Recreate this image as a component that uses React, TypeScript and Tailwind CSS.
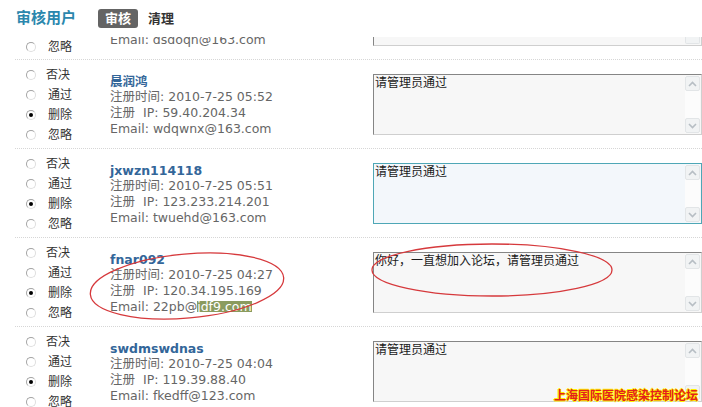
import React from "react";
import clsx from "clsx";

type Entry = {
  name: string;
  time: string;
  ip: string;
  email: React.ReactNode;
  message: string;
  focused?: boolean;
};

const ENTRIES: Entry[] = [
  {
    name: "晨润鸿",
    time: "2010-7-25 05:52",
    ip: "59.40.204.34",
    email: "wdqwnx@163.com",
    message: "请管理员通过",
  },
  {
    name: "jxwzn114118",
    time: "2010-7-25 05:51",
    ip: "123.233.214.201",
    email: "twuehd@163.com",
    message: "请管理员通过",
    focused: true,
  },
  {
    name: "fnar092",
    time: "2010-7-25 04:27",
    ip: "120.34.195.169",
    email: (
      <>
        22pb@
        <span className="inline-block bg-[#8a9b5e] leading-[11px] text-white">jdf9.com</span>
      </>
    ),
    message: "你好，一直想加入论坛，请管理员通过",
  },
  {
    name: "swdmswdnas",
    time: "2010-7-25 04:04",
    ip: "119.39.88.40",
    email: "fkedff@123.com",
    message: "请管理员通过",
  },
];

const OPTIONS = ["否决", "通过", "删除", "忽略"];

function Radio({ label, checked, first }: { label: string; checked: boolean; first: boolean }) {
  return (
    <div className="flex h-[20px] items-center">
      <span className="flex h-[10px] w-[10px] items-center justify-center rounded-full border border-[#a4a4a4] border-b-[#dedede] border-r-[#dedede] bg-white">
        {checked && <span className="h-[4px] w-[4px] rounded-full bg-black" />}
      </span>
      <span className={first ? "ml-[10px]" : "ml-[12px]"}>{label}</span>
    </div>
  );
}

function Chevron({ up }: { up?: boolean }) {
  return (
    <svg width="9" height="6" viewBox="0 0 9 6">
      <path
        d={up ? "M1 5 L4.5 1.5 L8 5" : "M1 1 L4.5 4.5 L8 1"}
        fill="none"
        stroke="#b7bec4"
        strokeWidth="1.6"
      />
    </svg>
  );
}

function ScrollButton({ up }: { up?: boolean }) {
  return (
    <div className="flex h-[15px] items-center justify-center rounded-[2px] border border-[#e2e5e7] bg-[#f1f3f4]">
      <Chevron up={up} />
    </div>
  );
}

function MessageBox({ text, focused }: { text: string; focused?: boolean }) {
  return (
    <div
      className={clsx(
        "mt-[14px] flex h-[61px] w-[329px] shrink-0 border",
        focused
          ? "border-[#4ea7b6] bg-[#f3f7fb]"
          : "border-[#858585] border-b-[#cfcfcf] border-r-[#cfcfcf] bg-[#f7f7f7]"
      )}
    >
      <div className="flex-1 pl-[1px] pt-[1px] text-[12px] leading-[15px] text-[#1a1a1a]">{text}</div>
      <div className="my-[1px] mr-[1px] flex w-[15px] flex-col bg-[#fcfcfc]">
        <ScrollButton up />
        <div className="flex-1" />
        <ScrollButton />
      </div>
    </div>
  );
}

// the row scrolled mostly under the header: only its last line shows
function TailRow() {
  return (
    <div className="ml-[15px] flex h-[23px] border-b border-dotted border-[#d6d6d6]">
      <div className="w-[95px] shrink-0 pl-[11px] text-[12px] text-[#333]">
        <Radio label="忽略" checked={false} first={false} />
      </div>
      <div className="w-[263px] shrink-0 overflow-hidden text-[12.5px] leading-4 text-[#666]">
        <div className="-mt-[5px]">Email: dsdoqn@163.com</div>
      </div>
      <div className="flex h-[9px] w-[329px] shrink-0 justify-end border-x border-b border-[#858585] border-b-[#cfcfcf] border-r-[#cfcfcf] bg-[#f7f7f7]">
        <div className="mb-[1px] mr-[1px] w-[15px] rounded-b-[2px] border-x border-b border-[#e2e5e7] bg-[#f1f3f4]" />
      </div>
    </div>
  );
}

function EntryRow({ entry }: { entry: Entry }) {
  return (
    <div className="ml-[15px] flex h-[89px] border-b border-dotted border-[#d6d6d6]">
      <div className="w-[95px] shrink-0 pl-[11px] pt-[5px] text-[12px] text-[#333]">
        {OPTIONS.map((opt, i) => (
          <Radio key={opt} label={opt} checked={opt === "删除"} first={i === 0} />
        ))}
      </div>
      <div className="w-[263px] shrink-0 pt-[14px] text-[12.5px] leading-4 text-[#666]">
        <div className="font-bold leading-[15px] text-[#336699]">{entry.name}</div>
        <div>注册时间: {entry.time}</div>
        <div>注册{"\u00a0"} IP: {entry.ip}</div>
        <div>Email: {entry.email}</div>
      </div>
      <MessageBox text={entry.message} focused={entry.focused} />
    </div>
  );
}

export default function App() {
  return (
    <div className="relative flex h-[407px] w-[702px] flex-col overflow-hidden bg-white font-['DejaVu_Sans','Noto_Sans_CJK_SC',sans-serif]">
      <div className="flex h-[37px] shrink-0 items-center bg-white pl-[16px]">
        <span className="text-[15px] font-bold text-[#2b87ad]">审核用户</span>
        <span className="ml-[22px] h-[19px] rounded-[3px] bg-[#646464] px-[7px] text-[13px] font-bold leading-[19px] text-white">
          审核
        </span>
        <span className="ml-[10px] text-[13px] font-bold text-[#333]">清理</span>
      </div>

      <div className="flex-1 overflow-hidden">
        <TailRow />
        {ENTRIES.map((entry) => (
          <EntryRow key={entry.name} entry={entry} />
        ))}
      </div>

      <svg className="pointer-events-none absolute left-0 top-0" width="702" height="407">
        <ellipse
          cx="187"
          cy="286"
          rx="97"
          ry="32"
          transform="rotate(-5 187 286)"
          fill="none"
          stroke="#d6393c"
          strokeWidth="1.3"
        />
        <ellipse cx="492" cy="270" rx="120" ry="26" fill="none" stroke="#d6393c" strokeWidth="1.3" />
      </svg>

      <div className="absolute bottom-[4px] right-[4px] text-[12px] font-bold leading-[14px] text-[#e3211c] [text-shadow:1px_0_#fff200,-1px_0_#fff200,0_1px_#fff200,0_-1px_#fff200]">
        上海国际医院感染控制论坛
      </div>
    </div>
  );
}
